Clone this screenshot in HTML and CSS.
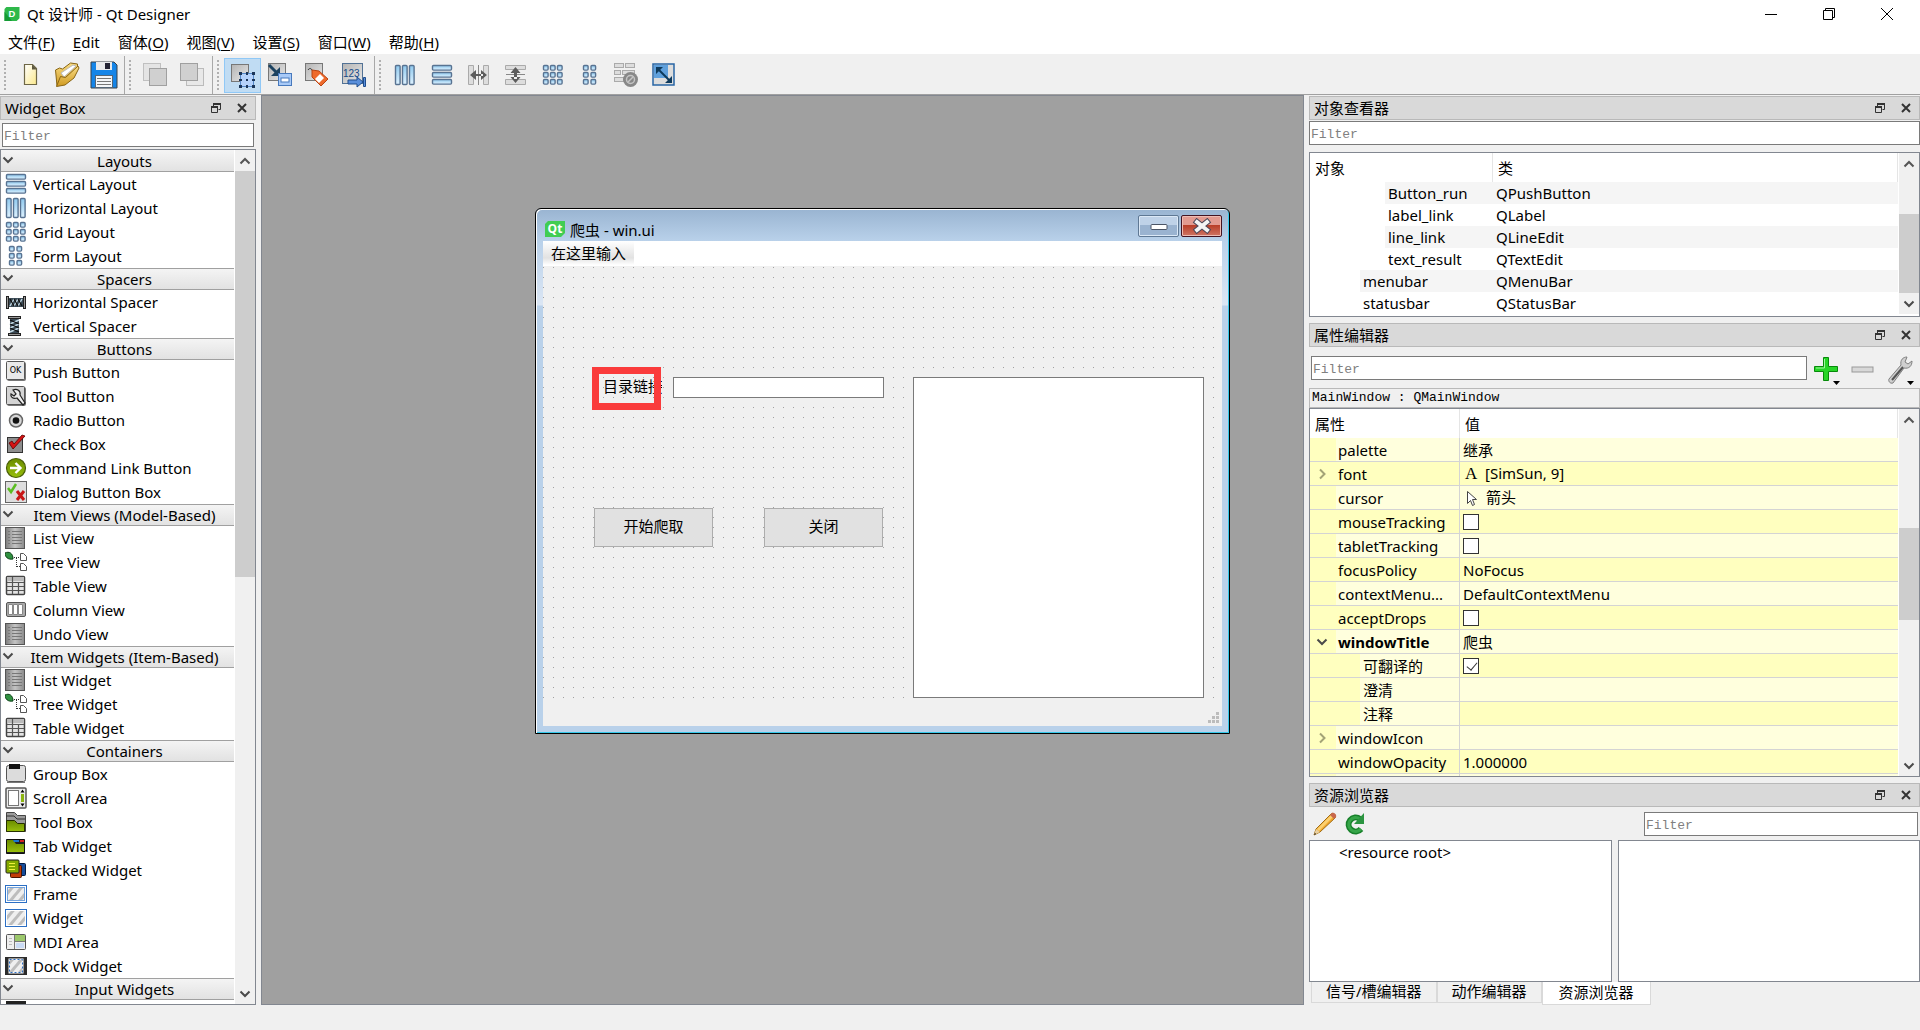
FILE: index.html
```html
<!DOCTYPE html>
<html lang="zh-CN">
<head>
<meta charset="utf-8">
<title>Qt 设计师 - Qt Designer</title>
<link rel="stylesheet" href="styles.css">
</head>
<body>
<svg class="sprite" aria-hidden="true">
  <defs>
    <linearGradient id="g-blue" x1="0" y1="0" x2="0" y2="1"><stop offset="0" stop-color="#8fc9ee"/><stop offset="1" stop-color="#dff2ff"/></linearGradient>
    <linearGradient id="g-grey" x1="0" y1="0" x2="1" y2="1"><stop offset="0" stop-color="#b4b4b4"/><stop offset="1" stop-color="#e8e8e8"/></linearGradient>
    <linearGradient id="g-dark" x1="0" y1="0" x2="1" y2="0"><stop offset="0" stop-color="#7c7c7c"/><stop offset=".5" stop-color="#c4c4c4"/><stop offset="1" stop-color="#8a8a8a"/></linearGradient>
    <linearGradient id="g-green" x1="0" y1="0" x2="0" y2="1"><stop offset="0" stop-color="#6b8c00"/><stop offset="1" stop-color="#98bf0c"/></linearGradient>
    <linearGradient id="g-page" x1="0" y1="0" x2="1" y2="1"><stop offset="0" stop-color="#fff"/><stop offset="1" stop-color="#fbe98c"/></linearGradient>
    <linearGradient id="g-gold" x1="0" y1="0" x2="0" y2="1"><stop offset="0" stop-color="#f8dc86"/><stop offset="1" stop-color="#d09a20"/></linearGradient>
    <pattern id="p-hatch" width="7" height="7" patternUnits="userSpaceOnUse" patternTransform="rotate(40)"><rect width="7" height="7" fill="#efefef"/><rect width="3" height="7" fill="#bdbdbd"/></pattern>
  </defs>
  <symbol id="i-vlay" viewBox="0 0 22 22"><g fill="url(#g-blue)" stroke="#587392" stroke-width="1.4"><rect x="1.5" y="1.5" width="19" height="4.6" rx="1"/><rect x="1.5" y="8.5" width="19" height="4.6" rx="1"/><rect x="1.5" y="15.5" width="19" height="4.6" rx="1"/></g></symbol>
  <symbol id="i-hlay" viewBox="0 0 22 22"><g fill="url(#g-blue)" stroke="#587392" stroke-width="1.4"><rect x="1.5" y="1.5" width="4.6" height="19" rx="1"/><rect x="8.5" y="1.5" width="4.6" height="19" rx="1"/><rect x="15.5" y="1.5" width="4.6" height="19" rx="1"/></g></symbol>
  <symbol id="i-grid" viewBox="0 0 22 22"><g fill="url(#g-blue)" stroke="#587392" stroke-width="1.4"><rect x="1.5" y="1.5" width="4.6" height="4.6" rx="1"/><rect x="8.5" y="1.5" width="4.6" height="4.6" rx="1"/><rect x="15.5" y="1.5" width="4.6" height="4.6" rx="1"/><rect x="1.5" y="8.5" width="4.6" height="4.6" rx="1"/><rect x="8.5" y="8.5" width="4.6" height="4.6" rx="1"/><rect x="15.5" y="8.5" width="4.6" height="4.6" rx="1"/><rect x="1.5" y="15.5" width="4.6" height="4.6" rx="1"/><rect x="8.5" y="15.5" width="4.6" height="4.6" rx="1"/><rect x="15.5" y="15.5" width="4.6" height="4.6" rx="1"/></g></symbol>
  <symbol id="i-form" viewBox="0 0 22 22"><g fill="url(#g-blue)" stroke="#587392" stroke-width="1.4"><rect x="4.5" y="1.5" width="4.6" height="4.6" rx="1"/><rect x="12" y="1.5" width="4.6" height="4.6" rx="1"/><rect x="4.5" y="8.5" width="4.6" height="4.6" rx="1"/><rect x="12" y="8.5" width="4.6" height="4.6" rx="1"/><rect x="4.5" y="15.5" width="4.6" height="4.6" rx="1"/><rect x="12" y="15.5" width="4.6" height="4.6" rx="1"/></g></symbol>
  <symbol id="i-hsp" viewBox="0 0 22 22"><path d="M4 7h14v9H4z" fill="#3a4a55"/><path d="M5 15l4-7M9 15l4-7M13 15l4-7" stroke="#c4dbe8" stroke-width="1.4"/><path d="M5 8l4 7M9 8l4 7M13 8l4 7" stroke="#111" stroke-width="1.3"/><rect x="1" y="5" width="3" height="13" fill="#222"/><rect x="18" y="5" width="3" height="13" fill="#222"/><path d="M2.500 6v11M19.500 6v11" stroke="#999"/></symbol>
  <symbol id="i-vsp" viewBox="0 0 22 22"><path d="M5 4h9v14H5z" fill="#3a4a55"/><path d="M5 9l9-4M5 13l9-4M5 17l9-4" stroke="#c4dbe8" stroke-width="1.4"/><path d="M5 5l9 4M5 9l9 4M5 13l9 4" stroke="#111" stroke-width="1.3"/><rect x="3" y="1" width="13" height="3" fill="#222"/><rect x="3" y="18" width="13" height="3" fill="#222"/><path d="M4 2.500h11M4 19.500h11" stroke="#999"/></symbol>
  <symbol id="i-tool" viewBox="0 0 22 22"><rect x="2" y="2" width="19" height="19" rx="2" fill="#777"/><rect x="1.500" y="1.500" width="18" height="18" rx="1" fill="#d4d4d4" stroke="#555"/><path d="M8 5c4-2 8 1 7 5l5 8-2 2-6-7c-4 1-7-1-6-4l3 2 2-2z" fill="#eee" stroke="#222" stroke-width="1.200"/></symbol>
  <symbol id="i-radio" viewBox="0 0 22 22"><circle cx="11" cy="11.500" r="6.500" fill="#d8d8d8" stroke="#666" stroke-width="1.500"/><circle cx="11" cy="11.500" r="3.300" fill="#111"/></symbol>
  <symbol id="i-check" viewBox="0 0 22 22"><rect x="2.500" y="4.500" width="15" height="15" fill="#8d8d8d" stroke="#333"/><path d="M4 10l4 6L20 3l-3-1-8 9-2-3z" fill="#d41414" stroke="#5c0000" stroke-width=".8"/></symbol>
  <symbol id="i-cmd" viewBox="0 0 22 22"><circle cx="11" cy="11" r="9.500" fill="url(#g-green)" stroke="#4a5f08" stroke-width="1.200"/><path d="M5 11h9M10.500 6l5 5-5 5" fill="none" stroke="#fff" stroke-width="2.400"/></symbol>
  <symbol id="i-dlg" viewBox="0 0 22 22"><rect x=".5" y=".5" width="21" height="21" fill="#dedede" stroke="#666"/><path d="M3 7l3 4 5-8" fill="none" stroke="#5bbd22" stroke-width="2.500"/><path d="M12 10l7 9M19 10l-7 9" stroke="#c81818" stroke-width="3"/></symbol>
  <symbol id="i-list" viewBox="0 0 22 22"><rect x=".5" y=".5" width="19" height="21" fill="url(#g-dark)" stroke="#555"/><path d="M3 4.500h2M7 4.500h10M3 7.500h2M7 7.500h10M3 10.500h2M7 10.500h10M3 13.500h2M7 13.500h10M3 16.500h2M7 16.500h10" stroke="#777"/></symbol>
  <symbol id="i-tree" viewBox="0 0 22 22"><path d="M0 2c4-2 8 0 8 6-5 1-8-2-8-6z" fill="#2f9140" stroke="#0b3e14"/><path d="M9 6.500h6M11.500 7v9M12 15.500h3" stroke="#333" stroke-dasharray="1 1"/><path d="M15.500 2.500h3l3 3v4h-6zM15.500 12.500h3l3 3v4h-6z" fill="#fff" stroke="#555"/></symbol>
  <symbol id="i-table" viewBox="0 0 22 22"><rect x="1.500" y="1.500" width="18" height="18" rx="1" fill="#e4e4e4" stroke="#444" stroke-width="1.500"/><path d="M2 2h17v4H2z" fill="#bbb"/><path d="M2 7.500h17M2 11.500h17M2 15.500h17M7.500 2v17M13.500 7v12" stroke="#555" stroke-width="1.200"/></symbol>
  <symbol id="i-col" viewBox="0 0 22 22"><rect x="1.500" y="3.500" width="19" height="14" rx="1.500" fill="#aaa" stroke="#555"/><path d="M3.500 5.500h4v10h-4zM8.500 5.500h4v10h-4zM13.500 5.500h4v10h-4z" fill="#fff" stroke="#888"/></symbol>
  <symbol id="i-group" viewBox="0 0 22 22"><rect x="1.500" y="2.500" width="19" height="16" rx="2" fill="#dcdcdc" stroke="#555"/><path d="M2 19.500h18" stroke="#777"/><rect x="4" y="1" width="11" height="5" fill="#111"/></symbol>
  <symbol id="i-scroll" viewBox="0 0 22 22"><rect x="1" y="1" width="20" height="20" rx="1" fill="#ececec" stroke="#555" stroke-width="1.500"/><rect x="3.500" y="3.500" width="10" height="15" fill="#fff" stroke="#777"/><rect x="16" y="7" width="3" height="8" fill="#8cb410"/><path d="M15.500 5.500l2-3 2 3zM15.500 16.500l2 3 2-3z"/></symbol>
  <symbol id="i-tbox" viewBox="0 0 22 22"><path d="M1.500 1.500h8l3 3h8v16h-19z" fill="#9b9b9b" stroke="#444"/><path d="M1 5h8l3 3h8" fill="none" stroke="#333"/><path d="M1.500 9.500h8l3 3h7v8h-18z" fill="url(#g-green)" stroke="#263000"/></symbol>
  <symbol id="i-tab" viewBox="0 0 22 22"><path d="M1.500 4.500h18v14h-18z" fill="#222" stroke="#111"/><path d="M2 5h6l3 4h8v8H2z" fill="url(#g-green)"/><path d="M8 5h6v2H9z" fill="#1976d2"/><path d="M15 5h4v2h-4z" fill="#d42020"/></symbol>
  <symbol id="i-stack" viewBox="0 0 22 22"><rect x="9.500" y="4.500" width="11" height="12" rx="1" fill="#164c9a" stroke="#001a44"/><rect x="5.500" y="6.500" width="11" height="12" rx="1" fill="#c23c06" stroke="#4c1500"/><rect x="1" y="1" width="13" height="13" rx="1" fill="#83a900" stroke="#222"/><path d="M4 4.500h6M4 7.500h6M4 10.500h6" stroke="#f0f03c"/></symbol>
  <symbol id="i-frame" viewBox="0 0 22 22"><rect x=".5" y="2.500" width="21" height="17" fill="#fff" stroke="#2c6fc4"/><rect x="2.500" y="4.500" width="17" height="13" fill="url(#p-hatch)" stroke="#75a4dc"/></symbol>
  <symbol id="i-widget" viewBox="0 0 22 22"><rect x=".5" y="2.500" width="21" height="17" fill="#fff" stroke="#2c6fc4"/><rect x="2" y="4" width="18" height="14" fill="url(#p-hatch)"/></symbol>
  <symbol id="i-mdi" viewBox="0 0 22 22"><rect x="1.500" y="3.500" width="19" height="15" rx="1" fill="#eee" stroke="#555"/><rect x="10" y="4" width="10" height="6" fill="#9cc86c"/><path d="M9.500 4v14M10 10.500h10" stroke="#777"/><path d="M4 7.500h3M4 10.500h3M4 13.500h3" stroke="#bbb"/><rect x="11" y="12" width="8" height="5" fill="#cadbf5"/></symbol>
  <symbol id="i-dock" viewBox="0 0 22 22"><rect y="2" width="22" height="18" fill="#2c2c2c"/><rect x="4.500" y="4.500" width="13" height="13" fill="#e4e4e4" stroke="#fff" stroke-width="2"/><rect x="4.500" y="4.500" width="13" height="13" fill="url(#p-hatch)" stroke="#2c6fc4" stroke-width="1" stroke-dasharray="2 2"/></symbol>
  <symbol id="i-combo" viewBox="0 0 22 22"><rect x="1" width="20" height="22" fill="#222"/></symbol>

  <symbol id="t-new" viewBox="0 0 28 28"><path d="M8.500 3.500h8l4 4v16h-12z" fill="url(#g-page)" stroke="#6e6746" stroke-width="1.200"/><path d="M16 3.500v5h5z" fill="#5d5840"/></symbol>
  <symbol id="t-open" viewBox="0 0 28 28"><path d="M2.500 9l4-2 3 1 8-6 7 1v5L9 20l-5 5z" fill="url(#g-gold)" stroke="#8a6614"/><path d="M8 12L20 4l3 1-12 11z" fill="#fff" stroke="#bbb"/><path d="M3.500 25.500l4-10 5 1L25 5l1 2-5 10-9 7z" fill="url(#g-gold)" stroke="#8a6614"/></symbol>
  <symbol id="t-save" viewBox="0 0 28 28"><path d="M1 1h23l3 3v23H1z" fill="#1585e8" stroke="#3a424a"/><path d="M6 1h16v8H6z" fill="#e8eaec"/><rect x="15" y="2" width="5" height="6" fill="#222233"/><rect x="5.500" y="14.500" width="17" height="12" fill="#f4f6f8" stroke="#556677"/><path d="M7 17.500h14M7 20.500h14M7 23.500h14" stroke="#777"/></symbol>
  <symbol id="t-front" viewBox="0 0 28 28"><rect x="2.500" y="2.500" width="17" height="17" fill="#e4e4e4" stroke="#c0c0c0"/><rect x="8.500" y="7.500" width="17" height="17" fill="#d0d0d0" stroke="#a0a0a0"/></symbol>
  <symbol id="t-back" viewBox="0 0 28 28"><rect x="8.500" y="7.500" width="17" height="17" fill="#e8e8e8" stroke="#bbb"/><rect x="2.500" y="2.500" width="17" height="17" fill="#d0d0d0" stroke="#a0a0a0"/></symbol>
  <symbol id="t-edit" viewBox="0 0 28 28"><rect x="2.500" y="3.500" width="17" height="17" fill="url(#g-grey)" stroke="#777"/><rect x="11.500" y="12.500" width="13" height="13" fill="#b5d2fb" stroke="#5688c8"/><path d="M10 11h3v3h-3zM17 11h2v3h-2zM23 11h3v3h-3zM10 18h3v2h-3zM23 18h3v2h-3zM10 24h3v3h-3zM17 24h2v3h-2zM23 24h3v3h-3zM17 18h2v2h-2z" fill="#1b3558"/></symbol>
  <symbol id="t-sig" viewBox="0 0 28 28"><rect x="2.500" y="2.500" width="17" height="17" fill="url(#g-grey)" stroke="#777"/><path d="M3 4l8 8" stroke="#1c4260" stroke-width="3"/><path d="M14 6v9H5z" fill="#1c4260"/><rect x="12.500" y="12.500" width="13" height="12" fill="#a9caf7" stroke="#4779bd"/><rect x="15" y="17" width="8" height="4" fill="#fff" stroke="#4779bd"/></symbol>
  <symbol id="t-bud" viewBox="0 0 28 28"><rect x="2.500" y="2.500" width="17" height="17" fill="url(#g-grey)" stroke="#777"/><path d="M5 9c2-3 4-1 5 2" stroke="#333" fill="none"/><path d="M9 9l7 1 9 8-7 7-9-9z" fill="#ee6a2c" stroke="#b84413"/><path d="M17 13l4 4-5 5-4-4z" fill="#fff"/></symbol>
  <symbol id="t-hsplit" viewBox="0 0 28 28"><path d="M3.500 4.500h5v19h-5zM18.500 4.500h5v19h-5z" fill="#ddd" stroke="#aaa"/><path d="M13.500 4v20" stroke="#888"/><path d="M5 14l6-5v10zM22 14l-6-5v10zM9 13h9v2H9z" fill="#5c5c5c"/></symbol>
  <symbol id="t-vsplit" viewBox="0 0 28 28"><path d="M3.500 4.500h20v4h-20zM3.500 18.500h20v5h-20z" fill="#ddd" stroke="#aaa"/><path d="M4 13.500h19" stroke="#888"/><path d="M13.500 6l5 6h-10zM13.500 22l5-6h-10zM12 9h3v9h-3z" fill="#5c5c5c"/></symbol>
  <symbol id="t-break" viewBox="0 0 28 28"><g fill="#ddd" stroke="#aaa"><rect x="1.500" y="2.500" width="9" height="4"/><rect x="12.500" y="2.500" width="9" height="4"/><rect x="1.500" y="9.500" width="6" height="4"/><rect x="9.500" y="9.500" width="12" height="4"/><rect x="1.500" y="16.500" width="9" height="4"/></g><circle cx="17.500" cy="18.500" r="7.500" fill="#888"/><circle cx="17.500" cy="18.500" r="4" fill="none" stroke="#c5c5c5" stroke-width="1.500"/><path d="M15 21l5-5" stroke="#c5c5c5" stroke-width="1.500"/></symbol>
  <symbol id="t-adj" viewBox="0 0 28 28"><rect x="3" y="3" width="21" height="21" fill="#ddd" stroke="#2866a5" stroke-width="1.500"/><rect x="4" y="4" width="14" height="13" fill="#5fa0dc"/><path d="M8 8l12 12" stroke="#0e3a5c" stroke-width="2"/><path d="M6 6h7l-7 7zM22 22h-7l7-7z" fill="#0e3a5c"/></symbol>

  <symbol id="i-float" viewBox="0 0 12 12"><path d="M3.500 1.500h7v6h-2M3.500 1.500v3" fill="none" stroke="#333"/><path d="M3 1h8v2H3zM1 4h7v2H1z" fill="#333"/><path d="M1.500 5.500h6v5h-6z" fill="none" stroke="#333"/></symbol>
  <symbol id="i-x" viewBox="0 0 12 12"><path d="M2 2l8 8M10 2l-8 8" stroke="#333" stroke-width="2"/></symbol>
  <symbol id="i-down" viewBox="0 0 12 12"><path d="M1.500 3.500l4.500 4.500 4.500-4.500" fill="none" stroke="#4a4a4a" stroke-width="2"/></symbol>
  <symbol id="i-up" viewBox="0 0 12 12"><path d="M1.500 8.500L6 4l4.500 4.500" fill="none" stroke="#555" stroke-width="2"/></symbol>
  <symbol id="i-right" viewBox="0 0 12 12"><path d="M4 1.500L8.500 6 4 10.500" fill="none" stroke="#a3a376" stroke-width="2"/></symbol>
</svg>

<header class="titlebar">
  <svg class="logo" viewBox="0 0 16 16"><path d="M2 0h14v12l-3 3H0V2z" fill="#2eb84a"/><path d="M0 5l8 10H0z" fill="#149a35"/><text x="8" y="11" font-size="10" font-weight="700" font-family="Liberation Sans" fill="#fff" text-anchor="middle">D</text></svg>
  <h1>Qt 设计师 - Qt Designer</h1>
  <div class="sysbuttons">
    <button aria-label="最小化"><svg viewBox="0 0 14 14"><path d="M1 7.500h12" stroke="#000"/></svg></button>
    <button aria-label="还原"><svg viewBox="0 0 14 14"><path d="M1.500 3.500h9v9h-9zM3.500 3V1.500h9v9H11" fill="none" stroke="#000"/></svg></button>
    <button aria-label="关闭"><svg viewBox="0 0 14 14"><path d="M1 1l12 12M13 1L1 13" stroke="#000"/></svg></button>
  </div>
</header>

<nav class="menubar">
  <button>文件(<u>F</u>)</button><button><u>E</u>dit</button><button>窗体(<u>O</u>)</button><button>视图(<u>V</u>)</button><button>设置(<u>S</u>)</button><button>窗口(<u>W</u>)</button><button>帮助(<u>H</u>)</button>
</nav>

<div class="toolbar">
  <div class="toolgroup">
    <button aria-label="新建"><svg><use href="#t-new"/></svg></button><button aria-label="打开"><svg><use href="#t-open"/></svg></button><button aria-label="保存"><svg><use href="#t-save"/></svg></button>
  </div>
  <div class="toolgroup">
    <button aria-label="放到前面"><svg><use href="#t-front"/></svg></button><button aria-label="放到后面"><svg><use href="#t-back"/></svg></button>
  </div>
  <div class="toolgroup">
    <button class="active" aria-label="编辑控件"><svg><use href="#t-edit"/></svg></button><button aria-label="编辑信号/槽"><svg><use href="#t-sig"/></svg></button><button aria-label="编辑伙伴"><svg><use href="#t-bud"/></svg></button><button aria-label="编辑Tab顺序"><svg viewBox="0 0 28 28"><rect x="2.500" y="2.500" width="20" height="20" fill="url(#g-grey)" stroke="#527295"/><path d="M8 19h9v-3l6 5-6 5v-3H8zM23.500 16.500h2v9h-2z" fill="#5a8fdb" stroke="#1e4c8c"/><text x="3" y="16" font-size="10" font-family="Liberation Sans" fill="#174a87">123</text></svg></button>
  </div>
  <div class="toolgroup">
    <button aria-label="水平布局"><svg class="small"><use href="#i-hlay"/></svg></button><button aria-label="垂直布局"><svg class="small"><use href="#i-vlay"/></svg></button><button aria-label="水平分裂器"><svg><use href="#t-hsplit"/></svg></button><button aria-label="垂直分裂器"><svg><use href="#t-vsplit"/></svg></button><button aria-label="栅格布局"><svg class="small"><use href="#i-grid"/></svg></button><button aria-label="表单布局"><svg class="small"><use href="#i-form"/></svg></button><button aria-label="打破布局"><svg><use href="#t-break"/></svg></button><button aria-label="调整大小"><svg><use href="#t-adj"/></svg></button>
  </div>
</div>

<main class="workspace">
  <aside class="dock widgetbox">
    <div class="docktitle"><h2>Widget Box</h2><button aria-label="浮动"><svg><use href="#i-float"/></svg></button><button aria-label="关闭"><svg><use href="#i-x"/></svg></button></div>
    <input class="filter" type="text" placeholder="Filter" aria-label="Filter">
    <div class="scrollpane">
      <div class="content">
        <h3><svg><use href="#i-down"/></svg>Layouts</h3>
        <ul>
          <li><svg><use href="#i-vlay"/></svg>Vertical Layout</li>
          <li><svg><use href="#i-hlay"/></svg>Horizontal Layout</li>
          <li><svg><use href="#i-grid"/></svg>Grid Layout</li>
          <li><svg><use href="#i-form"/></svg>Form Layout</li>
        </ul>
        <h3><svg><use href="#i-down"/></svg>Spacers</h3>
        <ul>
          <li><svg><use href="#i-hsp"/></svg>Horizontal Spacer</li>
          <li><svg><use href="#i-vsp"/></svg>Vertical Spacer</li>
        </ul>
        <h3><svg><use href="#i-down"/></svg>Buttons</h3>
        <ul>
          <li><svg viewBox="0 0 22 22"><rect x="2" y="1" width="19" height="19" rx="2" fill="#777"/><rect x="1.500" y=".5" width="18" height="18" rx="1" fill="#e9e9e9" stroke="#555"/><text x="10.500" y="12" font-size="8" font-family="DejaVu Sans" text-anchor="middle">OK</text></svg>Push Button</li>
          <li><svg><use href="#i-tool"/></svg>Tool Button</li>
          <li><svg><use href="#i-radio"/></svg>Radio Button</li>
          <li><svg><use href="#i-check"/></svg>Check Box</li>
          <li><svg><use href="#i-cmd"/></svg>Command Link Button</li>
          <li><svg><use href="#i-dlg"/></svg>Dialog Button Box</li>
        </ul>
        <h3><svg><use href="#i-down"/></svg>Item Views (Model-Based)</h3>
        <ul>
          <li><svg><use href="#i-list"/></svg>List View</li>
          <li><svg><use href="#i-tree"/></svg>Tree View</li>
          <li><svg><use href="#i-table"/></svg>Table View</li>
          <li><svg><use href="#i-col"/></svg>Column View</li>
          <li><svg><use href="#i-list"/></svg>Undo View</li>
        </ul>
        <h3><svg><use href="#i-down"/></svg>Item Widgets (Item-Based)</h3>
        <ul>
          <li><svg><use href="#i-list"/></svg>List Widget</li>
          <li><svg><use href="#i-tree"/></svg>Tree Widget</li>
          <li><svg><use href="#i-table"/></svg>Table Widget</li>
        </ul>
        <h3><svg><use href="#i-down"/></svg>Containers</h3>
        <ul>
          <li><svg><use href="#i-group"/></svg>Group Box</li>
          <li><svg><use href="#i-scroll"/></svg>Scroll Area</li>
          <li><svg><use href="#i-tbox"/></svg>Tool Box</li>
          <li><svg><use href="#i-tab"/></svg>Tab Widget</li>
          <li><svg><use href="#i-stack"/></svg>Stacked Widget</li>
          <li><svg><use href="#i-frame"/></svg>Frame</li>
          <li><svg><use href="#i-widget"/></svg>Widget</li>
          <li><svg><use href="#i-mdi"/></svg>MDI Area</li>
          <li><svg><use href="#i-dock"/></svg>Dock Widget</li>
        </ul>
        <h3><svg><use href="#i-down"/></svg>Input Widgets</h3>
        <ul><li><svg><use href="#i-combo"/></svg></li></ul>
      </div>
      <div class="scrollbar sb-widgets"><button aria-label="向上"><svg><use href="#i-up"/></svg></button><div class="track"><div class="thumb"></div></div><button aria-label="向下"><svg><use href="#i-down"/></svg></button></div>
    </div>
  </aside>

  <section class="mdi">
    <div class="formwin">
      <div class="formtitle">
        <svg class="qt" viewBox="0 0 20 16"><path d="M3 0h17v12l-4 4H0V3z" fill="#41cd52"/><text x="10" y="12" font-size="12" font-weight="700" font-family="Open Sans" fill="#fff" text-anchor="middle">Qt</text></svg>
        <span>爬虫 - win.ui</span>
        <button class="min" aria-label="最小化"><svg viewBox="0 0 20 16"><rect x="2" y="6.500" width="16" height="5" rx="1" fill="#fff" stroke="#4b5566"/></svg></button>
        <button class="close" aria-label="关闭"><svg viewBox="0 0 20 16"><path d="M5 4l10 8M15 4L5 12" stroke="#4b4657" stroke-width="6" stroke-linecap="square"/><path d="M5 4l10 8M15 4L5 12" stroke="#f4f4f4" stroke-width="4" stroke-linecap="square"/></svg></button>
      </div>
      <div class="formbody">
        <div class="formmenu"><span>在这里输入</span></div>
        <div class="canvas">
          <label class="w-label" for="line_link">目录链接</label>
          <div class="mark"></div>
          <input class="w-line" id="line_link" type="text">
          <button class="w-btn w-run">开始爬取</button>
          <button class="w-btn w-quit">关闭</button>
          <textarea class="w-text" aria-label="text_result"></textarea>
        </div>
        <div class="formstatus"><svg viewBox="0 0 12 12"><path d="M8 0h3v3H8zM4 4h3v3H4zM8 4h3v3H8zM0 8h3v3H0zM4 8h3v3H4zM8 8h3v3H8z" fill="#bcbcbc"/></svg></div>
      </div>
    </div>
  </section>

  <aside class="rightdocks">
    <section class="dock inspector">
      <div class="docktitle"><h2>对象查看器</h2><button aria-label="浮动"><svg><use href="#i-float"/></svg></button><button aria-label="关闭"><svg><use href="#i-x"/></svg></button></div>
      <input class="filter" type="text" placeholder="Filter" aria-label="Filter">
      <div class="scrollpane">
        <table class="objects">
          <colgroup><col class="c-obj"><col></colgroup>
          <thead><tr><th>对象</th><th>类</th></tr></thead>
          <tbody>
            <tr class="alt d2"><td>Button_run</td><td>QPushButton</td></tr>
            <tr class="d2"><td>label_link</td><td>QLabel</td></tr>
            <tr class="alt d2"><td>line_link</td><td>QLineEdit</td></tr>
            <tr class="d2"><td>text_result</td><td>QTextEdit</td></tr>
            <tr class="alt d1"><td>menubar</td><td>QMenuBar</td></tr>
            <tr class="d1"><td>statusbar</td><td>QStatusBar</td></tr>
          </tbody>
        </table>
        <div class="scrollbar sb-objects"><button aria-label="向上"><svg><use href="#i-up"/></svg></button><div class="track"><div class="thumb"></div></div><button aria-label="向下"><svg><use href="#i-down"/></svg></button></div>
      </div>
    </section>

    <section class="dock properties">
      <div class="docktitle"><h2>属性编辑器</h2><button aria-label="浮动"><svg><use href="#i-float"/></svg></button><button aria-label="关闭"><svg><use href="#i-x"/></svg></button></div>
      <div class="propbar">
        <input class="filter" type="text" placeholder="Filter" aria-label="Filter">
        <button aria-label="添加"><svg viewBox="0 0 28 30"><path d="M9.500 1.500h5v9h9v5h-9v9h-5v-9h-9v-5h9z" fill="#27d527" stroke="#078a0a"/><path d="M10.500 3v9H2" fill="none" stroke="#9cf79c"/><path d="M19 25h7l-3.500 4z"/></svg></button>
        <button aria-label="删除"><svg viewBox="0 0 28 30"><rect x="1" y="11" width="21" height="5" fill="#d8d8d8" stroke="#999"/></svg></button>
        <button aria-label="配置"><svg viewBox="0 0 28 30"><path d="M1 23L13 9c-1-5 2-8 6-8l-2 5 3 2 4-3c0 5-3 8-8 7L5 27c-3 1-5-2-4-4z" fill="#cfcfcf" stroke="#808080"/><path d="M4 24L15 11" stroke="#555" stroke-width="2"/><path d="M19 25h7l-3.500 4z"/></svg></button>
      </div>
      <div class="objname">MainWindow : QMainWindow</div>
      <div class="scrollpane">
        <table class="props">
          <colgroup><col class="c-prop"><col></colgroup>
          <thead><tr><th>属性</th><th>值</th></tr></thead>
          <tbody>
            <tr><td>palette</td><td>继承</td></tr>
            <tr><td><svg class="exp"><use href="#i-right"/></svg>font</td><td><span class="fonticon">A</span>[SimSun, 9]</td></tr>
            <tr><td>cursor</td><td><svg class="cursor" viewBox="0 0 16 18"><path d="M4.500 1.500v12l3-3 2 5 2-1-2-5h4z" fill="#fff" stroke="#444"/></svg>箭头</td></tr>
            <tr><td>mouseTracking</td><td><input type="checkbox" aria-label="mouseTracking"></td></tr>
            <tr><td>tabletTracking</td><td><input type="checkbox" aria-label="tabletTracking"></td></tr>
            <tr><td>focusPolicy</td><td>NoFocus</td></tr>
            <tr><td>contextMenu...</td><td>DefaultContextMenu</td></tr>
            <tr><td>acceptDrops</td><td><input type="checkbox" aria-label="acceptDrops"></td></tr>
            <tr><td class="bold"><svg class="exp"><use href="#i-down"/></svg>windowTitle</td><td>爬虫</td></tr>
            <tr class="sub"><td>可翻译的</td><td><input type="checkbox" checked aria-label="可翻译的"></td></tr>
            <tr class="sub"><td>澄清</td><td></td></tr>
            <tr class="sub"><td>注释</td><td></td></tr>
            <tr><td><svg class="exp"><use href="#i-right"/></svg>windowIcon</td><td></td></tr>
            <tr><td>windowOpacity</td><td>1.000000</td></tr>
            <tr><td></td><td></td></tr>
          </tbody>
        </table>
        <div class="scrollbar sb-props"><button aria-label="向上"><svg><use href="#i-up"/></svg></button><div class="track"><div class="thumb"></div></div><button aria-label="向下"><svg><use href="#i-down"/></svg></button></div>
      </div>
    </section>

    <section class="dock resources">
      <div class="docktitle"><h2>资源浏览器</h2><button aria-label="浮动"><svg><use href="#i-float"/></svg></button><button aria-label="关闭"><svg><use href="#i-x"/></svg></button></div>
      <div class="resbar">
        <button aria-label="编辑资源"><svg viewBox="0 0 24 24"><path d="M1 23l2-6L18 2c2-2 6 1 4 4L7 20z" fill="#f2a82c" stroke="#a06c14"/><path d="M4 17L18 3l2 2L6 19z" fill="#fbd070"/><path d="M17 3l2-2c2-1 5 2 4 4l-2 2z" fill="#c8674c"/><path d="M1 23l2-6 4 3z" fill="#e8cfa0"/><path d="M1 23l1-2 1 1z"/></svg></button>
        <button aria-label="重新加载"><svg viewBox="0 0 24 24"><path d="M18 17a7 7 0 1 1-1-10" fill="none" stroke="#17802a" stroke-width="6"/><path d="M18 17a7 7 0 1 1-1-10" fill="none" stroke="#36a548" stroke-width="3"/><path d="M21 1v11H11z" fill="#2b9440"/></svg></button>
        <input class="filter" type="text" placeholder="Filter" aria-label="Filter">
      </div>
      <div class="respanes"><div>&lt;resource root&gt;</div><div></div></div>
      <div class="tabs"><button>信号/槽编辑器</button><button>动作编辑器</button><button class="current">资源浏览器</button></div>
    </section>
  </aside>
</main>
</body>
</html>
```
FILE: styles.css
```css
* { box-sizing: border-box; }

body {
  margin: 0;
  height: 100vh;
  display: flex;
  flex-direction: column;
  overflow: hidden;
  background: #f0f0f0;
  color: #000;
  font: 15px/20px "Noto Sans", "Noto Sans CJK SC", sans-serif;
}

h1, h2, h3, ul { margin: 0; padding: 0; font: inherit; }
ul { list-style: none; }
button { margin: 0; padding: 0; border: 0; background: none; font: inherit; color: inherit; }
svg { display: block; flex: none; }
.sprite { position: absolute; width: 0; height: 0; }

/* Title bar and menus */
.titlebar {
  display: flex;
  align-items: center;
  height: 28px;
  flex: none;
  padding: 0 4px;
  gap: 7px;
  background: #fff;
}
.logo { width: 16px; height: 15px; }
.titlebar h1 { flex: 1; }
.sysbuttons { display: flex; }
.sysbuttons button { width: 58px; height: 28px; display: grid; place-items: center; }
.sysbuttons svg { width: 14px; height: 14px; }

.menubar {
  display: flex;
  height: 28px;
  flex: none;
  background: #fff;
  border-bottom: 2px solid #f0f0f0;
}
.menubar button { padding: 0 10px 0 8px; height: 28px; }
.menubar u { text-underline-offset: 2px; }

.toolbar {
  display: flex;
  height: 39px;
  flex: none;
  border-bottom: 1px solid #a0a0a0;
}
.toolgroup {
  display: flex;
  align-items: center;
  padding-right: 2px;
  border-right: 1px solid #a8a8a8;
}
.toolgroup:last-child { border-right: 0; }
.toolgroup::before {
  content: "";
  width: 2px;
  height: 30px;
  margin: 0 5px 0 4px;
  background: repeating-linear-gradient(#b0b0b0 0 2px, #f0f0f0 2px 4px);
}
.toolgroup button {
  width: 37px;
  height: 35px;
  display: grid;
  place-items: center;
  border: 1px solid transparent;
}
.toolgroup .active { background: #c0dcf3; border-color: #90c8f6; }
.toolgroup svg { width: 28px; height: 28px; }
.toolgroup svg.small { width: 22px; height: 22px; }

/* Docks */
.workspace {
  flex: 1;
  min-height: 0;
  display: flex;
  margin-bottom: 25px;
}
.dock { display: flex; flex-direction: column; min-height: 0; }
.docktitle {
  display: flex;
  align-items: center;
  height: 24px;
  flex: none;
  margin-top: 1px;
  padding: 0 5px 0 4px;
  gap: 10px;
  background: #d9d9d9;
  border: 1px solid #b9b9b9;
}
.docktitle h2 { flex: 1; }
.docktitle button { width: 16px; height: 16px; display: grid; place-items: center; }
.docktitle svg { width: 12px; height: 12px; }

.filter {
  height: 24px;
  min-width: 0;
  flex: none;
  padding: 2px 1px 0;
  border: 1px solid #7a7a7a;
  background: #fff;
  font: 13px/20px "Liberation Mono", "Noto Sans CJK SC", monospace;
}
.filter::placeholder { color: #808080; }

.scrollpane {
  display: flex;
  min-height: 0;
  background: #fff;
  border: 1px solid #828790;
  overflow: hidden;
}
.scrollbar {
  width: 20px;
  flex: none;
  display: flex;
  flex-direction: column;
  background: #f0f0f0;
}
.scrollbar button { height: 21px; flex: none; display: grid; place-items: center; }
.scrollbar svg { width: 12px; height: 12px; }
.track { flex: 1; min-height: 0; }
.thumb { background: #cdcdcd; }

/* Widget box */
.widgetbox { width: 256px; flex: none; margin-right: 5px; }
.widgetbox .filter { margin: 3px 2px 2px; }
.widgetbox .scrollpane { flex: 1; }
.content { flex: 1; height: 0; }
.content h3 {
  display: flex;
  align-items: center;
  justify-content: center;
  position: relative;
  height: 22px;
  margin-right: 1px;
  border-top: 1px solid #a0a0a0;
  border-bottom: 1px solid #a0a0a0;
  background: linear-gradient(#f4f4f4, #e2e2e2);
  padding-left: 14px;
}
.content h3:first-child { border-top-color: #f4f4f4; }
.content h3 svg { position: absolute; left: 1px; top: 3px; width: 12px; height: 12px; }
.content li { display: flex; align-items: center; height: 24px; padding-left: 4px; gap: 6px; }
.content li svg { width: 22px; height: 22px; }
.sb-widgets .thumb { height: 50%; }

/* Form editing area */
.mdi {
  flex: 1;
  position: relative;
  min-width: 0;
  overflow: hidden;
  background: #a0a0a0;
  border: 1px solid #828790;
}
.formwin {
  position: absolute;
  left: 273px;
  top: 112px;
  width: 695px;
  height: 526px;
  display: flex;
  flex-direction: column;
  padding: 1px 6px 6px;
  border: 1px solid #000;
  border-radius: 6px 6px 0 0;
  box-shadow: inset 1px 1px 0 #fff, inset -1px -1px 0 #35c8ea;
  background: linear-gradient(#99b4d1, #b9d1ea 32px, #dbe6f4 96px, #b9d1ea 97px);
}
.formtitle { display: flex; align-items: center; height: 31px; flex: none; padding: 0 1px 0 3px; gap: 5px; }
.formtitle span { flex: 1; padding-top: 9px; }
.formtitle .qt { width: 20px; height: 16px; margin-top: 7px; }
.formtitle button {
  width: 41px;
  height: 22px;
  display: grid;
  place-items: center;
  margin-left: -3px;
  border: 1px solid #5f7894;
  border-radius: 2px;
  box-shadow: inset 0 0 0 1px #dbe8f6;
}
.formtitle button svg { width: 20px; height: 16px; }
.min { background: linear-gradient(#bfd2e8 45%, #9ab3d0 45%); }
.formtitle .close { border-color: #431422; background: linear-gradient(#e29a90 45%, #b83c26 45%, #cf7564); box-shadow: inset 0 0 0 1px #eebcb4; }
.formbody { flex: 1; display: flex; flex-direction: column; margin: 0 1px 1px; background: #f0f0f0; }
.formmenu { height: 25px; flex: none; background: #fff; }
.formmenu span { display: inline-block; height: 24px; line-height: 24px; padding: 0 8px; background: linear-gradient(#fff, #e2e2e2 70%, #fff); }
.canvas {
  position: relative;
  flex: 1;
  background:
    linear-gradient(90deg, transparent 1px, #f0f0f0 1px) 0 0 / 10px 10px,
    linear-gradient(#a0a0a0 1px, #f0f0f0 1px) 0 1px / 10px 10px;
}
.formstatus { height: 26px; flex: none; display: flex; justify-content: flex-end; align-items: flex-end; padding: 2px; }
.formstatus svg { width: 12px; height: 12px; }
.w-label { position: absolute; left: 60px; top: 110px; width: 59px; overflow: hidden; white-space: nowrap; }
.mark { position: absolute; left: 49px; top: 101px; width: 69px; height: 43px; border: 7px solid #fa3b3b; }
.w-line { position: absolute; left: 130px; top: 111px; width: 211px; height: 21px; border: 1px solid #7a7a7a; }
.w-btn { position: absolute; top: 242px; width: 119px; height: 39px; padding-bottom: 3px; border: 1px solid #adadad; background: #e1e1e1; }
.w-run { left: 51px; }
.w-quit { left: 221px; }
.w-text { position: absolute; left: 370px; top: 111px; width: 291px; height: 321px; border: 1px solid #7a7a7a; background: #fff; resize: none; }

/* Right docks */
.rightdocks { width: 611px; flex: none; margin-left: 5px; display: flex; flex-direction: column; gap: 5px; }
.properties { flex: 1; }
.inspector .filter { margin: 1px 0 7px; }
.inspector .scrollpane { padding-bottom: 2px; }
table { flex: 1; align-self: flex-start; border-collapse: separate; border-spacing: 0; table-layout: fixed; width: 0; margin-right: 1px; }
th { height: 29px; padding: 0 5px; text-align: left; font-weight: 400; border-right: 1px solid #e5e5e5; }
td { padding: 0; white-space: nowrap; overflow: hidden; }
.objects td { height: 22px; padding-left: 3px; }
.c-obj { width: 183px; }
.objects tr.alt td { background: #f5f5f5; }
.objects .d2 td:first-child { padding-left: 78px; }
.objects .d1 td:first-child { padding-left: 53px; }
.objects .alt.d2 td:first-child { background: linear-gradient(90deg, #fff 75px, #f5f5f5 75px); }
.objects .alt.d1 td:first-child { background: linear-gradient(90deg, #fff 50px, #f5f5f5 50px); }
.sb-objects .track, .sb-props .track { display: flex; flex-direction: column; }
.sb-objects .track::before { content: ""; flex: 41; }
.sb-objects .thumb { flex: 80; }
.sb-props .track::before { content: ""; flex: 98; }
.sb-props .thumb { flex: 91; }
.sb-props .track::after { content: ""; flex: 135; }

.propbar { display: flex; align-items: flex-start; padding: 9px 4px 2px 2px; height: 41px; flex: none; }
.propbar .filter { flex: 1; margin-right: 7px; }
.propbar button { width: 28px; height: 30px; }
.propbar button + button { margin-left: 9px; }
.propbar svg { width: 28px; height: 30px; }
.objname { height: 20px; flex: none; padding-left: 2px; border: 1px solid #b9b9b9; font: 13px/18px "Liberation Mono", monospace; }
.properties .scrollpane { flex: 1; }
.c-prop { width: 150px; }
.props td { height: 24px; padding: 0 0 0 3px; border-bottom: 1px solid #d4d4d4; background: #ffffdd; }
.props td:first-child { padding-left: 28px; border-right: 1px solid #d4d4d4; background: linear-gradient(90deg, #ffffbf 26px, #ffffdd 26px); position: relative; }
.props .sub td:first-child { padding-left: 53px; background: linear-gradient(90deg, #ffffbf 50px, #ffffdd 50px); }
.props tbody tr:nth-child(even) td { background: #ffffbf; }
.props .bold { font-weight: 700; }
.exp { position: absolute; left: 6px; top: 6px; width: 12px; height: 12px; }
.fonticon { display: inline-block; width: 22px; padding-left: 2px; font: 17px/20px "Liberation Serif", serif; }
.cursor { display: inline-block; width: 16px; height: 18px; margin-right: 7px; vertical-align: middle; }
.props input { appearance: none; display: block; width: 16px; height: 16px; margin: 0; border: 1px solid #333; background: #fff; }
.props input:checked::before { content: ""; display: block; width: 5px; height: 9px; margin: 1px 0 0 5px; border: solid #333; border-width: 0 1px 1px 0; transform: rotate(40deg); }

.resources { flex: none; }
.resbar { display: flex; align-items: center; height: 33px; padding: 1px 2px 0 4px; gap: 4px; }
.resbar button { width: 26px; height: 24px; }
.resbar svg { width: 24px; height: 24px; }
.resbar .filter { width: 274px; margin-left: auto; }
.respanes { display: flex; height: 142px; gap: 6px; }
.respanes div { flex: 1; border: 1px solid #828790; background: #fff; padding: 1px 0 0 29px; }
.tabs { display: flex; align-items: flex-start; height: 23px; padding-left: 2px; }
.tabs button { height: 21px; padding: 0 14px 2px; border: 1px solid #d9d9d9; border-top: 0; line-height: 18px; }
.tabs .current { height: 23px; padding: 0 16px 2px; background: #fff; }
```
